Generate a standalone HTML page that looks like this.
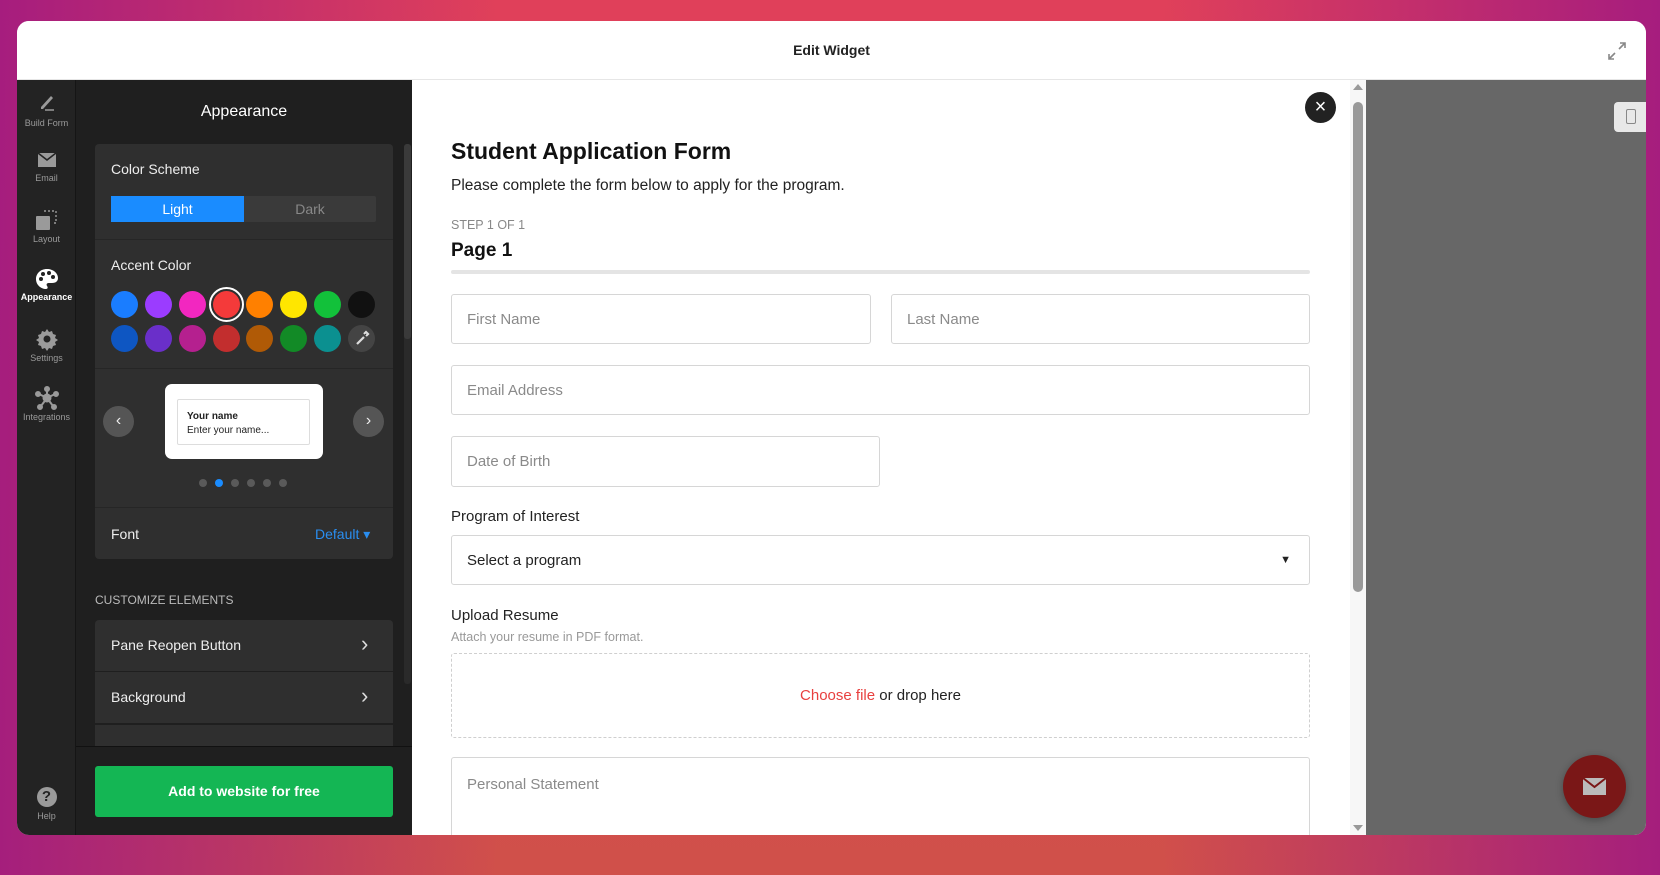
<!DOCTYPE html>
<html><head><meta charset="utf-8"><style>
*{box-sizing:border-box;margin:0;padding:0}
body{width:1660px;height:875px;overflow:hidden;font-family:"Liberation Sans",sans-serif;position:relative;
background:linear-gradient(90deg,rgba(160,25,130,.9),rgba(160,25,130,0) 30%,rgba(160,25,130,0) 70%,rgba(160,25,130,.9)),linear-gradient(180deg,#e0405a,#d0504a);}
.abs{position:absolute}
.win{left:17px;top:21px;width:1629px;height:814px;border-radius:12px;overflow:hidden;background:#fff}
.hdr{left:0;top:0;width:1629px;height:59px;background:#fff;border-bottom:1px solid #e6e6e6}
.side{left:0;top:59px;width:59px;height:755px;background:#232323;border-right:1px solid #151515}
.si{position:absolute;left:0;width:59px;text-align:center;font-size:9px;color:#9a9a9a}
.panel{left:59px;top:59px;width:336px;height:755px;background:#1f1f1f}
.card{background:#2f2f2f;border-radius:4px}
.txt{color:#eee;font-size:14px}
.sw{position:absolute;width:27px;height:27px;border-radius:50%}
.form{left:395px;top:59px;width:938px;height:755px;background:#fff}
.inp{position:absolute;border:1px solid #d6d6d6;border-radius:3px;background:#fff;color:#8a8a8a;font-size:15px;padding-left:15px;display:flex;align-items:center}
.lbl{position:absolute;font-size:15px;color:#222}
</style></head><body>
<div class="abs win">
 <div class="abs hdr"><div class="abs" style="left:0;width:1629px;top:21px;text-align:center;font-size:14px;font-weight:bold;color:#222">Edit Widget</div>
  <svg class="abs" style="left:1588px;top:18px" width="24" height="24" viewBox="0 0 24 24" fill="none" stroke="#888" stroke-width="1.6"><path d="M15 4h5v5M20 4l-6 6M9 20H4v-5M4 20l6-6"/></svg>
 </div>
 <div class="abs side">
  <div class="si" style="top:12px"><svg width="22" height="20" viewBox="0 0 22 20"><path d="M5 15L15 4l2 2L7 17H5z" fill="#9a9a9a"/><path d="M9 18h9" stroke="#9a9a9a" stroke-width="1.5"/></svg><div style="margin-top:4px">Build Form</div></div>
  <div class="si" style="top:71px"><svg width="22" height="18" viewBox="0 0 22 18"><rect x="2" y="2" width="18" height="14" fill="#9a9a9a"/><path d="M2 2l9 7 9-7" stroke="#232323" stroke-width="1.6" fill="none"/></svg><div style="margin-top:2px">Email</div></div>
  <div class="si" style="top:128px"><svg width="26" height="24" viewBox="0 0 26 24"><rect x="2" y="8" width="14" height="14" fill="#9a9a9a" rx="1"/><path d="M10 3h12v12h-4" stroke="#9a9a9a" stroke-width="1.4" stroke-dasharray="2 2" fill="none"/></svg><div>Layout</div></div>
  <div class="si" style="top:188px;color:#fff;font-weight:bold"><svg width="24" height="22" viewBox="0 0 24 22"><path d="M12 1C5 1 1 6 1 11c0 6 5 10 10 10 2 0 2-2 1-3-1-2 0-3 2-3h3c4 0 6-2 6-5 0-5-5-9-11-9z" fill="#fff"/><circle cx="6" cy="11" r="2" fill="#232323"/><circle cx="8" cy="6" r="2" fill="#232323"/><circle cx="14" cy="5" r="2" fill="#232323"/><circle cx="18" cy="9" r="2" fill="#232323"/></svg><div>Appearance</div></div>
  <div class="si" style="top:247px"><svg width="24" height="24" viewBox="0 0 24 24"><path d="M12 2l2 3 3-1 1 3 3 1-1 3 3 2-3 2 1 3-3 1-1 3-3-1-2 3-2-3-3 1-1-3-3-1 1-3-3-2 3-2-1-3 3-1 1-3 3 1z" fill="#9a9a9a"/><circle cx="12" cy="12" r="3.5" fill="#232323"/></svg><div>Settings</div></div>
  <div class="si" style="top:306px"><svg width="24" height="24" viewBox="0 0 24 24" stroke="#9a9a9a" stroke-width="2" fill="#9a9a9a"><path d="M12 12L12 3M12 12L4 8M12 12L20 8M12 12L6 20M12 12L18 20"/><circle cx="12" cy="12" r="3.5"/><circle cx="12" cy="3" r="2"/><circle cx="3" cy="8" r="2"/><circle cx="21" cy="8" r="2"/><circle cx="5" cy="21" r="2"/><circle cx="19" cy="21" r="2"/></svg><div>Integrations</div></div>
  <div class="si" style="top:707px"><div style="width:20px;height:20px;border-radius:50%;background:#9a9a9a;color:#232323;font-weight:bold;font-size:15px;line-height:20px;margin:0 auto">?</div><div style="margin-top:4px">Help</div></div>
 </div>
 <div class="abs panel">
  <div class="abs" style="left:0;width:336px;top:23px;text-align:center;color:#fff;font-size:16px">Appearance</div>
  <div class="abs" style="left:328px;top:64px;width:7px;height:540px;background:#2a2a2a;border-radius:3px"><div style="height:195px;background:#3a3a3a;border-radius:3px"></div></div>
  <div class="abs card" style="left:19px;top:64px;width:298px;height:415px">
   <div class="abs txt" style="left:16px;top:17px">Color Scheme</div>
   <div class="abs" style="left:16px;top:52px;width:265px;height:26px;background:#3a3a3a;border-radius:2px"></div>
   <div class="abs" style="left:16px;top:52px;width:133px;height:26px;background:#1a8cff;color:#fff;font-size:14px;text-align:center;line-height:26px">Light</div>
   <div class="abs" style="left:149px;top:52px;width:132px;height:26px;color:#888;font-size:14px;text-align:center;line-height:26px">Dark</div>
   <div class="abs" style="left:0;top:95px;width:298px;height:1px;background:#262626"></div>
   <div class="abs txt" style="left:16px;top:113px">Accent Color</div>
   <div class="sw" style="left:16px;top:147px;background:#1a7dff"></div>
   <div class="sw" style="left:50px;top:147px;background:#9b3cff"></div>
   <div class="sw" style="left:84px;top:147px;background:#f227c0"></div>
   <div class="sw" style="left:114px;top:143px;width:35px;height:35px;border:2px solid #fff;background:#2f2f2f"><div style="margin:2px;width:27px;height:27px;border-radius:50%;background:#f43a3a"></div></div>
   <div class="sw" style="left:151px;top:147px;background:#ff8000"></div>
   <div class="sw" style="left:185px;top:147px;background:#ffe600"></div>
   <div class="sw" style="left:219px;top:147px;background:#12c13a"></div>
   <div class="sw" style="left:253px;top:147px;background:#111"></div>
   <div class="sw" style="left:16px;top:181px;background:#0e56c2"></div>
   <div class="sw" style="left:50px;top:181px;background:#6a2fc9"></div>
   <div class="sw" style="left:84px;top:181px;background:#b5208f"></div>
   <div class="sw" style="left:118px;top:181px;background:#c22e2e"></div>
   <div class="sw" style="left:151px;top:181px;background:#b05a06"></div>
   <div class="sw" style="left:185px;top:181px;background:#128a26"></div>
   <div class="sw" style="left:219px;top:181px;background:#0b9090"></div>
   <div class="sw" style="left:253px;top:181px;background:#444"><svg width="27" height="27" viewBox="0 0 27 27"><path d="M9 19l7-7M16 9l2-2 2 2-2 2" stroke="#ddd" stroke-width="2.2"/></svg></div>
   <div class="abs" style="left:0;top:224px;width:298px;height:1px;background:#262626"></div>
   <div class="abs" style="left:8px;top:262px;width:31px;height:31px;border-radius:50%;background:#555;color:#eee;text-align:center;line-height:30px;font-size:16px">&#8249;</div>
   <div class="abs" style="left:258px;top:262px;width:31px;height:31px;border-radius:50%;background:#555;color:#eee;text-align:center;line-height:30px;font-size:16px">&#8250;</div>
   <div class="abs" style="left:70px;top:240px;width:158px;height:75px;background:#fff;border-radius:7px">
    <div class="abs" style="left:12px;top:15px;width:133px;height:46px;border:1px solid #ddd;border-radius:2px;font-size:10px;color:#222;padding:10px 0 0 9px;line-height:14px"><b>Your name</b><br>Enter your name...</div>
   </div>
   <div class="abs" style="left:104px;top:335px;display:flex;gap:8px"><i style="width:8px;height:8px;border-radius:50%;background:#5a5a5a"></i><i style="width:8px;height:8px;border-radius:50%;background:#1a8cff"></i><i style="width:8px;height:8px;border-radius:50%;background:#5a5a5a"></i><i style="width:8px;height:8px;border-radius:50%;background:#5a5a5a"></i><i style="width:8px;height:8px;border-radius:50%;background:#5a5a5a"></i><i style="width:8px;height:8px;border-radius:50%;background:#5a5a5a"></i></div>
   <div class="abs" style="left:0;top:363px;width:298px;height:1px;background:#262626"></div>
   <div class="abs txt" style="left:16px;top:382px">Font</div>
   <div class="abs" style="left:220px;top:382px;color:#2a8ef0;font-size:14px">Default &#9662;</div>
  </div>
  <div class="abs" style="left:19px;top:513px;color:#bbb;font-size:12px">CUSTOMIZE ELEMENTS</div>
  <div class="abs card" style="left:19px;top:540px;width:298px;height:51px;border-radius:4px 4px 0 0"><div class="abs txt" style="left:16px;top:17px">Pane Reopen Button</div><div class="abs" style="left:266px;top:11px;color:#ddd;font-size:22px">&#8250;</div></div>
  <div class="abs card" style="left:19px;top:592px;width:298px;height:51px;border-radius:0"><div class="abs txt" style="left:16px;top:17px">Background</div><div class="abs" style="left:266px;top:11px;color:#ddd;font-size:22px">&#8250;</div></div>
  <div class="abs card" style="left:19px;top:645px;width:298px;height:30px;border-radius:0"></div>
  <div class="abs" style="left:0;top:666px;width:336px;height:89px;background:#1f1f1f;border-top:1px solid #111"></div>
  <div class="abs" style="left:19px;top:686px;width:298px;height:51px;background:#14b654;border-radius:3px;color:#fff;font-weight:bold;font-size:14px;text-align:center;line-height:51px">Add to website for free</div>
 </div>
 <div class="abs form">
  <div class="abs" style="left:893px;top:12px;width:31px;height:31px;border-radius:50%;background:#222;color:#fff;text-align:center;line-height:30px;font-size:20px">&#215;</div>
  <div class="abs" style="left:39px;top:58px;font-size:23px;font-weight:bold;color:#111">Student Application Form</div>
  <div class="abs" style="left:39px;top:97px;font-size:15.5px;color:#222">Please complete the form below to apply for the program.</div>
  <div class="abs" style="left:39px;top:138px;font-size:12.5px;color:#888">STEP 1 OF 1</div>
  <div class="abs" style="left:39px;top:160px;font-size:19px;font-weight:bold;color:#111">Page 1</div>
  <div class="abs" style="left:39px;top:190px;width:859px;height:4px;background:#e4e4e4;border-radius:2px"></div>
  <div class="inp" style="left:39px;top:214px;width:420px;height:50px">First Name</div>
  <div class="inp" style="left:479px;top:214px;width:419px;height:50px">Last Name</div>
  <div class="inp" style="left:39px;top:285px;width:859px;height:50px">Email Address</div>
  <div class="inp" style="left:39px;top:356px;width:429px;height:51px">Date of Birth</div>
  <div class="lbl" style="left:39px;top:428px">Program of Interest</div>
  <div class="inp" style="left:39px;top:455px;width:859px;height:50px;color:#222">Select a program<span style="position:absolute;right:18px;font-size:11px">&#9660;</span></div>
  <div class="lbl" style="left:39px;top:527px">Upload Resume</div>
  <div class="abs" style="left:39px;top:550px;font-size:12.5px;color:#999">Attach your resume in PDF format.</div>
  <div class="abs" style="left:39px;top:573px;width:859px;height:85px;border:1px dashed #cfcfcf;border-radius:3px;text-align:center;line-height:83px;font-size:15px;color:#222"><span style="color:#e8403f">Choose file</span> or drop here</div>
  <div class="inp" style="left:39px;top:677px;width:859px;height:100px;align-items:flex-start;padding-top:18px">Personal Statement</div>
 </div>
 <div class="abs" style="left:1333px;top:59px;width:16px;height:755px;background:#f7f7f7">
  <div class="abs" style="left:3px;top:4px;width:0;height:0;border-left:5px solid transparent;border-right:5px solid transparent;border-bottom:6px solid #999"></div>
  <div class="abs" style="left:3px;top:22px;width:10px;height:490px;background:#999;border-radius:5px"></div>
  <div class="abs" style="left:3px;top:745px;width:0;height:0;border-left:5px solid transparent;border-right:5px solid transparent;border-top:6px solid #999"></div>
 </div>
 <div class="abs" style="left:1349px;top:59px;width:280px;height:755px;background:#676767"></div>
 <div class="abs" style="left:1597px;top:81px;width:34px;height:30px;background:#e8e8e8;border-radius:4px 0 0 4px"><div style="margin:7px 0 0 12px;width:10px;height:15px;border:1.5px solid #888;border-radius:2px"></div></div>
 <div class="abs" style="left:1546px;top:734px;width:63px;height:63px;border-radius:50%;background:#7a1717;box-shadow:0 2px 8px rgba(0,0,0,.3)"><svg style="margin:22px 0 0 19px" width="25" height="19" viewBox="0 0 25 19"><rect x="1" y="1" width="23" height="17" fill="#bbb"/><path d="M1 1l11.5 9L24 1" stroke="#7a1717" stroke-width="2" fill="none"/></svg></div>
</div>
</body></html>
